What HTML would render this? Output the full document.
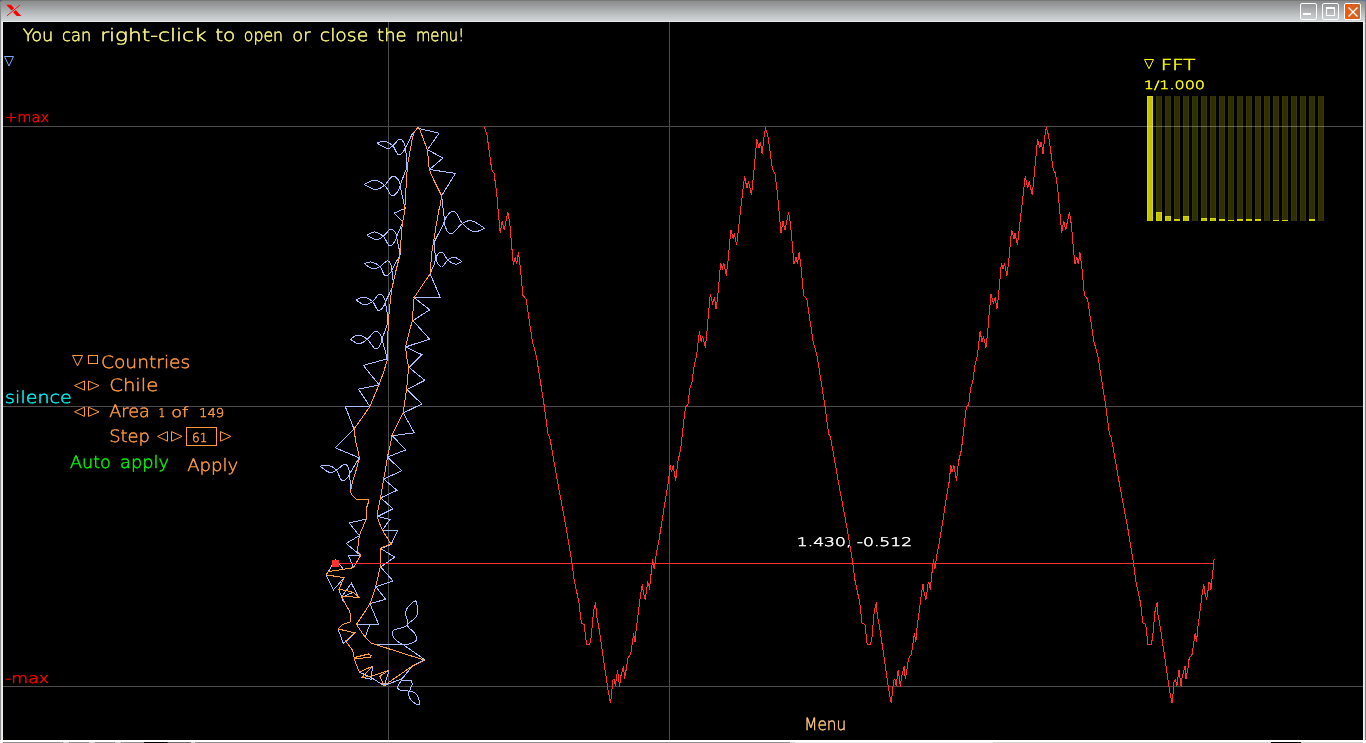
<!DOCTYPE html>
<html lang="en"><head><meta charset="utf-8"><title>FFT Countries</title>
<style>
html,body{margin:0;padding:0;background:#000;overflow:hidden}
body{width:1366px;height:743px;position:relative;font-family:"DejaVu Sans Light","DejaVu Sans","Liberation Sans",sans-serif}
#win{position:absolute;left:0;top:0;width:1366px;height:743px;background:#000;overflow:hidden}
#tb{position:absolute;left:0;top:0;width:1366px;height:22px;background:linear-gradient(to bottom,#787878 0,#787878 1px,#8b8d8c 1px,#999b9c 5.5px,#adb0b1 10.5px,#c0c4c6 15.5px,#d1d5d8 21px,#e4e8ea 21px,#e4e8ea 22px)}
#bl{position:absolute;left:0;top:22px;width:3px;height:718px;background:linear-gradient(to right,#8a8a8a 0,#8a8a8a 1px,#dfe4e8 1px,#eef1f4 3px)}
#br{position:absolute;left:1363px;top:22px;width:3px;height:718px;background:linear-gradient(to right,#eef1f4 0,#dfe4e8 2px,#808080 2px,#808080 3px)}
#bb{position:absolute;left:0;top:740px;width:1366px;height:3px;background:#fff}
#bb2{position:absolute;left:3px;top:742px;width:1360px;height:1px;background:linear-gradient(to right,#8e8e8e 0,#8e8e8e 60px,#d0d0cc 60px,#d0d0cc 66px,#8e8e8e 66px,#8e8e8e 86px,#d0d0cc 86px,#d0d0cc 92px,#8e8e8e 92px,#8e8e8e 112px,#d0d0cc 112px,#d0d0cc 118px,#8e8e8e 118px,#8e8e8e 141px,#000 141px,#000 164px,#6c6c6c 165px,#6c6c6c 188px,#d4d4d0 188px,#d4d4d0 192px,#8e8e8e 192px,#8e8e8e 787px,#d4d4d0 787px,#d4d4d0 792px,#f2f2f2 792px,#f2f2f2 990px,#d2d2ce 990px,#d2d2ce 1268px,#000 1268px,#000 1298px,#d2d2ce 1298px)}
.wb{position:absolute;top:3px;width:15px;height:15px;border:1px solid #fff;border-radius:2px;box-sizing:content-box}
svg{position:absolute;left:0;top:0}
svg text{font-family:"DejaVu Sans Light","DejaVu Sans","Liberation Sans",sans-serif;font-weight:200;white-space:pre;stroke-width:0.45px;text-rendering:geometricPrecision}
.ln{fill:none;stroke-width:1;shape-rendering:crispEdges}
.ic polygon,.ic rect{fill:none;stroke-width:1}
</style></head><body>
<div id="win">
<div id="tb"></div><div id="bl"></div><div id="br"></div><div id="bb"></div><div id="bb2"></div>
<div class="wb" style="left:1300px"></div>
<div class="wb" style="left:1322px"></div>
<div class="wb" style="left:1344px;background:linear-gradient(to right,#f05a0a,#c8642c)"></div>
<svg width="1366" height="743" viewBox="0 0 1366 743">
<!-- title bar icons -->
<polygon points="6.2,4.8 10.9,4.8 21.3,16 16.7,16" fill="#ff0000"/>
<line x1="16.2" y1="8.2" x2="11.2" y2="12.4" stroke="#b4b7b8" stroke-width="2.4"/>
<line x1="19.9" y1="5.1" x2="6.9" y2="15.9" stroke="#ff0000" stroke-width="0.9"/>
<rect x="0" y="0" width="1" height="22" fill="#8a8a8a"/><rect x="1365" y="0" width="1" height="22" fill="#808080"/>
<rect x="0" y="0" width="2" height="1" fill="#5c6068"/><rect x="0" y="1" width="1" height="1" fill="#6c7078"/>
<rect x="1364" y="0" width="2" height="1" fill="#3a78c8"/><rect x="1365" y="1" width="1" height="1" fill="#3a78c8"/>
<rect x="1303" y="13" width="8" height="2" fill="#fff"/>
<rect x="1326.5" y="7.5" width="8" height="8" fill="none" stroke="#fff" stroke-width="1"/><rect x="1326" y="7" width="9" height="2" fill="#fff"/>
<path d="M1348.5,7.5 L1357.5,16.5 M1357.5,7.5 L1348.5,16.5" stroke="#fff" stroke-width="1.3" fill="none"/>
<!-- FFT bars -->
<rect x="1147" y="96" width="6" height="125" fill="#383800"/><rect x="1148" y="96" width="4" height="125" fill="#2f2f02"/><rect x="1147" y="96" width="6" height="125" fill="#d6d600"/><rect x="1148" y="97" width="4" height="124" fill="#c2c200"/><rect x="1156" y="96" width="6" height="125" fill="#383800"/><rect x="1157" y="96" width="4" height="125" fill="#2f2f02"/><rect x="1156" y="212" width="6" height="9" fill="#d6d600"/><rect x="1157" y="213" width="4" height="8" fill="#c2c200"/><rect x="1165" y="96" width="6" height="125" fill="#383800"/><rect x="1166" y="96" width="4" height="125" fill="#2f2f02"/><rect x="1165" y="216" width="6" height="5" fill="#d6d600"/><rect x="1166" y="217" width="4" height="4" fill="#c2c200"/><rect x="1174" y="96" width="6" height="125" fill="#383800"/><rect x="1175" y="96" width="4" height="125" fill="#2f2f02"/><rect x="1174" y="219" width="6" height="2" fill="#d6d600"/><rect x="1175" y="220" width="4" height="1" fill="#caca00"/><rect x="1183" y="96" width="6" height="125" fill="#383800"/><rect x="1184" y="96" width="4" height="125" fill="#2f2f02"/><rect x="1183" y="216" width="6" height="5" fill="#d6d600"/><rect x="1184" y="217" width="4" height="4" fill="#c2c200"/><rect x="1192" y="96" width="6" height="125" fill="#383800"/><rect x="1193" y="96" width="4" height="125" fill="#2f2f02"/><rect x="1201" y="96" width="6" height="125" fill="#383800"/><rect x="1202" y="96" width="4" height="125" fill="#2f2f02"/><rect x="1201" y="218" width="6" height="3" fill="#d6d600"/><rect x="1202" y="219" width="4" height="2" fill="#c2c200"/><rect x="1210" y="96" width="6" height="125" fill="#383800"/><rect x="1211" y="96" width="4" height="125" fill="#2f2f02"/><rect x="1210" y="218" width="6" height="3" fill="#d6d600"/><rect x="1211" y="219" width="4" height="2" fill="#c2c200"/><rect x="1219" y="96" width="6" height="125" fill="#383800"/><rect x="1220" y="96" width="4" height="125" fill="#2f2f02"/><rect x="1219" y="219" width="6" height="2" fill="#d6d600"/><rect x="1220" y="220" width="4" height="1" fill="#caca00"/><rect x="1228" y="96" width="6" height="125" fill="#383800"/><rect x="1229" y="96" width="4" height="125" fill="#2f2f02"/><rect x="1228" y="220" width="6" height="1" fill="#d6d600"/><rect x="1237" y="96" width="6" height="125" fill="#383800"/><rect x="1238" y="96" width="4" height="125" fill="#2f2f02"/><rect x="1237" y="219" width="6" height="2" fill="#d6d600"/><rect x="1238" y="220" width="4" height="1" fill="#caca00"/><rect x="1246" y="96" width="6" height="125" fill="#383800"/><rect x="1247" y="96" width="4" height="125" fill="#2f2f02"/><rect x="1246" y="219" width="6" height="2" fill="#d6d600"/><rect x="1247" y="220" width="4" height="1" fill="#caca00"/><rect x="1255" y="96" width="6" height="125" fill="#383800"/><rect x="1256" y="96" width="4" height="125" fill="#2f2f02"/><rect x="1255" y="219" width="6" height="2" fill="#d6d600"/><rect x="1256" y="220" width="4" height="1" fill="#caca00"/><rect x="1264" y="96" width="6" height="125" fill="#383800"/><rect x="1265" y="96" width="4" height="125" fill="#2f2f02"/><rect x="1273" y="96" width="6" height="125" fill="#383800"/><rect x="1274" y="96" width="4" height="125" fill="#2f2f02"/><rect x="1273" y="220" width="6" height="1" fill="#d6d600"/><rect x="1282" y="96" width="6" height="125" fill="#383800"/><rect x="1283" y="96" width="4" height="125" fill="#2f2f02"/><rect x="1282" y="220" width="6" height="1" fill="#d6d600"/><rect x="1291" y="96" width="6" height="125" fill="#383800"/><rect x="1292" y="96" width="4" height="125" fill="#2f2f02"/><rect x="1300" y="96" width="6" height="125" fill="#383800"/><rect x="1301" y="96" width="4" height="125" fill="#2f2f02"/><rect x="1309" y="96" width="6" height="125" fill="#383800"/><rect x="1310" y="96" width="4" height="125" fill="#2f2f02"/><rect x="1309" y="219" width="6" height="2" fill="#d6d600"/><rect x="1310" y="220" width="4" height="1" fill="#caca00"/><rect x="1318" y="96" width="6" height="125" fill="#383800"/><rect x="1319" y="96" width="4" height="125" fill="#2f2f02"/>
<!-- grid -->
<g class="ln" stroke="#4b4b4b" style="mix-blend-mode:screen">
<line x1="3" y1="126.5" x2="1363" y2="126.5"/><line x1="3" y1="406.5" x2="1363" y2="406.5"/><line x1="3" y1="686.5" x2="1363" y2="686.5"/>
<line x1="388.5" y1="22" x2="388.5" y2="740"/><line x1="669.5" y1="22" x2="669.5" y2="740"/>
</g>
<!-- blue curve -->
<path class="ln" stroke="#aabeff" d="M418.2,127.3 L420.9,129.0 L439.1,133.2 L427.5,149.7 L442.9,158.0 L429.5,169.5 L455.4,173.4 L441.6,195.8 L443.3,210.5 L444.6,221.1 L443.3,224.4 L434.1,242.2 L434.7,251.4 L436.0,258.0 L434.1,264.6 L430.1,273.8 L440.2,297.2 L413.9,297.5 L429.7,309.8 L413.0,320.6 L429.5,339.1 L405.5,347.0 L421.8,354.6 L409.0,367.4 L424.8,380.3 L407.0,389.5 L421.8,404.0 L403.3,413.0 L414.3,432.8 L392.3,435.7 L405.7,449.9 L387.5,457.0 L401.8,470.8 L383.7,479.0 L396.9,490.3 L380.7,497.9 L393.0,508.8 L377.8,516.3 L389.9,519.6 L382.4,530.2 L397.6,530.4 L391.0,544.4 L393.0,541.3 L391.0,544.4 L380.7,548.6 L394.7,557.1 L380.7,567.0 L393.0,580.9 L375.8,586.8 L385.7,599.3 L369.9,603.7 L378.7,624.4 L356.4,624.4 M369.9,624.4 L365.3,636.5 M375.2,644.4 L402.9,644.4 L424.6,659.6 L412.1,666.2 L402.2,678.7 L384.4,685.5 L389.0,670.8 M384.4,685.8 L371.2,677.6 L359.3,672.1 M372.5,666.2 L371.2,679.3 L362.0,677.4 M402.9,644.4 C400.3,643.9 398.1,642.0 396.3,640.4 C394.5,638.8 392.6,636.3 392.3,634.5 C392.0,632.7 392.0,631.4 394.5,629.8 C397.0,628.2 405.7,627.9 407.5,625.0 C409.3,622.1 405.1,615.8 405.4,612.5 C405.7,609.2 407.8,607.4 409.5,605.5 C411.2,603.6 414.1,600.5 415.4,600.9 C416.7,601.3 417.2,605.3 417.3,608.0 C417.4,610.7 417.8,614.2 416.2,617.0 C414.6,619.8 407.8,622.3 407.5,625.0 C407.2,627.7 413.2,630.9 414.7,633.2 C416.2,635.6 417.1,637.5 416.7,639.1 C416.3,640.8 414.4,642.2 412.1,643.1 C409.8,644.0 405.5,644.9 402.9,644.4Z M402.2,678.7 L401.5,680.0 L411.8,680.0 L412.1,684.6 L409.5,691.2 L398.9,689.9 L397.3,687.3 L401.5,680.0 M409.5,691.2 C410.7,691.3 414.5,692.5 416.0,693.8 C417.5,695.1 418.2,697.3 418.7,699.1 C419.2,700.9 420.0,703.9 419.1,704.4 C418.2,704.9 415.0,703.5 413.4,702.4 C411.8,701.3 410.3,699.3 409.5,697.8 C408.7,696.3 408.8,694.3 408.8,693.2 C408.8,692.1 408.3,691.1 409.5,691.2Z M418.2,127.3 L412.3,133.8 L407.7,143.7 L405.3,148.0 L407.0,159.6 L406.4,168.8 L401.8,180.7 L400.2,185.3 L400.4,187.3 L404.4,205.7 L405.5,208.2 L394.1,213.2 L403.1,221.8 L402.4,223.0 L396.5,236.9 L400.2,254.0 L399.1,256.7 L391.9,269.9 L393.2,281.8 L392.3,287.6 L385.3,302.1 L387.9,316.6 L387.9,322.6 L382.0,339.1 L387.3,358.8 L363.3,365.4 L379.1,384.9 L358.5,389.2 L369.8,406.4 L345.3,406.6 L354.0,429.1 L335.2,447.8 L359.3,457.8 L349.5,474.1 L350.8,490.0 M366.0,519.2 L349.1,522.9 L359.3,535.7 L346.2,543.4 L357.8,553.2 L360.7,555.6 L348.5,555.6 L353.4,567.7 M343.0,568.5 L335.3,559.3 L328.4,571.6 M326.1,575.3 L333.6,589.8 L344.2,577.6 M338.9,589.5 L342.9,600.7 M342.2,596.0 L351.4,583.3 L358.7,597.4 M352.1,592.7 L343.5,596.7 M338.2,629.5 L343.5,643.7 L354.7,633.2 M377.0,143.1 C378.4,142.7 381.7,140.6 384.6,141.1 C387.5,141.6 390.3,143.2 392.8,145.7 C395.3,148.2 396.2,154.3 398.5,154.7 C400.8,155.1 404.8,150.6 405.1,147.7 C405.4,144.8 402.7,139.5 400.4,139.1 C398.1,138.7 395.2,144.0 392.8,145.7 C390.4,147.4 390.2,148.9 387.3,148.4 C384.4,147.9 378.9,144.1 377.0,143.1 M364.2,184.4 C366.1,183.6 371.0,180.1 374.7,180.3 C378.4,180.5 381.3,182.5 384.6,185.3 C387.9,188.1 389.6,195.8 392.5,195.8 C395.4,195.8 400.1,188.9 400.2,185.3 C400.3,181.7 396.1,176.0 393.2,176.0 C390.3,176.0 387.9,182.8 384.6,185.3 C381.3,187.8 379.1,189.7 375.4,189.5 C371.7,189.3 366.3,185.3 364.2,184.4 M367.1,235.3 C368.5,234.7 371.7,231.8 374.7,232.0 C377.7,232.2 380.5,233.8 383.3,236.3 C386.1,238.8 387.5,245.8 389.9,245.9 C392.3,246.0 396.3,240.0 396.5,236.9 C396.7,233.8 393.6,229.1 391.2,229.0 C388.8,228.9 386.1,234.4 383.3,236.3 C380.5,238.2 379.0,239.8 376.0,239.6 C373.0,239.4 368.7,236.1 367.1,235.3 M364.2,263.6 C365.5,263.3 368.5,261.4 371.4,262.0 C374.3,262.6 377.5,264.1 380.0,266.6 C382.5,269.1 383.1,275.2 385.3,275.8 C387.5,276.4 391.4,272.6 391.9,269.9 C392.4,267.2 390.1,261.5 387.9,260.9 C385.7,260.3 382.8,265.2 380.0,266.6 C377.2,268.0 375.6,269.2 372.7,268.6 C369.8,268.1 365.8,264.5 364.2,263.6 M356.3,300.2 C357.6,299.6 360.5,296.9 363.5,297.1 C366.5,297.3 369.7,299.0 372.5,301.5 C375.3,304.0 376.4,310.6 378.7,310.7 C381.0,310.8 385.1,305.2 385.3,302.1 C385.5,299.0 382.3,294.1 380.0,294.0 C377.7,293.9 375.3,299.5 372.5,301.5 C369.7,303.5 367.8,305.0 364.8,304.8 C361.8,304.6 357.9,301.0 356.3,300.2 M350.3,339.3 C351.7,338.5 355.1,335.1 358.2,335.1 C361.3,335.1 363.9,336.8 367.2,339.3 C370.5,341.8 373.3,349.0 376.0,349.0 C378.7,349.0 382.0,342.4 382.0,339.1 C382.0,335.8 378.7,331.2 376.0,331.2 C373.3,331.2 370.3,337.0 367.2,339.3 C364.1,341.6 362.0,343.7 358.9,343.7 C355.8,343.7 351.9,340.1 350.3,339.3 M320.0,466.2 C321.5,466.0 325.4,464.6 328.4,465.3 C331.4,466.0 333.8,467.4 336.3,470.2 C338.8,473.0 339.8,480.0 342.2,480.7 C344.6,481.4 348.9,477.1 349.5,474.1 C350.1,471.1 347.9,464.9 345.5,464.2 C343.1,463.5 339.2,468.7 336.3,470.2 C333.4,471.7 332.7,473.2 329.7,472.5 C326.7,471.8 321.8,467.4 320.0,466.2 M484.8,228.4 C482.4,227.0 475.8,221.7 471.7,220.8 C467.6,219.9 466.3,221.1 462.4,223.5 C458.5,225.9 453.9,234.3 450.6,233.9 C447.3,233.5 444.0,225.3 444.6,221.1 C445.2,216.9 450.6,210.8 453.9,211.2 C457.2,211.6 458.8,219.8 462.4,223.5 C466.0,227.2 469.5,230.7 473.6,231.6 C477.7,232.5 482.7,229.0 484.8,228.4 M461.8,261.3 C460.4,260.5 456.4,257.3 453.9,257.1 C451.4,256.9 450.2,258.2 447.9,260.0 C445.6,261.8 443.5,267.4 441.3,267.0 C439.1,266.6 435.9,260.7 436.0,258.0 C436.1,255.3 439.8,251.7 442.0,252.1 C444.2,252.5 445.4,257.8 447.9,260.0 C450.4,262.2 453.3,264.0 455.8,264.2 C458.3,264.4 460.7,261.8 461.8,261.3"/>
<!-- orange outline -->
<path class="ln" stroke="#ffa040" d="M417.9,127.3 L420.2,130.5 L427.5,150.3 L429.2,169.5 L434.7,182.0 L441.6,195.8 L440.3,205.7 L439.3,207.9 L436.0,226.4 L433.7,240.9 L431.8,252.7 L430.1,273.8 L414.1,297.5 L413.0,311.4 L412.0,321.9 L408.4,335.1 L405.7,346.3 L406.4,356.2 L408.6,366.8 L407.3,383.0 L406.4,390.2 L403.3,412.6 L392.3,434.3 L389.9,446.2 L387.5,456.8 L385.7,468.2 L383.7,478.7 L380.7,497.2 L378.9,505.1 L377.1,514.3 L378.5,520.9 L382.4,530.2 L391.0,544.0 L380.7,548.0 L380.4,566.4 L375.2,588.8 L369.9,604.0 L356.4,624.3 L364.6,636.5 L371.2,643.1 L375.2,644.4 L424.6,660.2 L412.1,666.2 L383.9,685.7 L379.8,676.0 L389.0,670.4 L371.2,676.4 L362.0,677.4 L372.5,666.2 L359.3,672.1 L354.2,659.0 L370.5,657.2 L371.2,655.6 L368.6,654.0 L354.1,657.6 L352.7,650.3 L345.5,641.1 L354.7,632.8 L338.2,629.0 L342.9,624.4 L350.8,621.8 L350.8,615.8 L349.5,611.2 L343.5,600.7 L342.5,596.4 L359.3,597.4 L352.8,592.1 L338.9,589.1 L344.2,577.6 L326.1,574.9 L328.4,571.6 L353.4,567.7 L360.7,555.2 L357.8,551.9 L357.8,547.3 L359.3,535.4 L366.6,518.3 L366.6,507.7 L368.6,501.8 L368.6,499.4 L356.4,499.4 L352.1,495.2 L350.4,491.3 L352.7,481.4 L356.7,468.2 L359.5,457.8 L355.6,440.9 L354.0,429.1 L369.8,406.6 L378.7,385.5 L382.6,375.0 L384.0,370.7 L387.5,359.5 L387.5,341.7 L388.6,319.3 L389.6,307.4 L391.2,292.9 L392.5,285.7 L395.2,273.8 L399.8,255.4 L400.7,243.5 L402.4,222.4 L404.4,213.2 L405.5,199.1 L406.4,179.3 L407.7,163.5 L409.7,153.0 L412.3,138.5 L413.9,132.5 L417.9,127.3Z"/>
<!-- wave -->
<path class="ln" stroke="#ff3232" d="M484.4,127.0 L487.0,135.0 L491.7,169.5 L494.1,173.5 L496.6,192.7 L500.2,233.0 L502.2,221.0 L504.2,230.0 L507.9,211.9 L509.9,225.0 L513.3,264.4 L515.3,257.3 L516.7,264.4 L518.4,252.2 L520.3,267.0 L522.9,295.2 L526.1,299.2 L532.3,341.0 L536.3,355.7 L544.4,407.0 L547.9,433.8 L549.7,437.0 L558.2,485.4 L566.6,530.0 L572.0,563.3 L574.1,580.0 L579.0,602.7 L581.3,622.8 L584.2,624.6 L586.5,644.4 L589.8,644.4 L591.2,636.8 L593.5,611.5 L595.6,602.4 L596.5,615.0 L599.1,629.0 L607.0,683.2 L608.2,691.0 L610.5,703.3 L611.9,691.0 L612.6,680.6 L614.0,679.3 L615.4,685.8 L617.5,670.0 L619.6,686.7 L620.6,677.0 L623.6,666.0 L624.5,678.8 L626.6,667.4 L627.6,658.7 L630.6,654.3 L631.8,646.5 L633.6,633.3 L635.0,642.0 L636.4,627.2 L638.5,611.5 L640.6,594.0 L642.3,584.4 L643.4,593.1 L645.2,599.5 L646.9,587.9 L647.5,582.0 L648.6,583.5 L649.5,589.5 L651.1,573.6 L652.6,559.0 L654.1,568.9 L655.9,556.4 L659.1,539.1 L662.3,519.7 L664.9,502.5 L668.4,482.0 L670.1,465.4 L671.4,472.3 L673.1,465.4 L675.7,480.5 L677.8,461.5 L680.6,450.0 L684.0,419.6 L685.6,406.5 L687.9,405.4 L689.7,388.7 L692.0,381.8 L694.3,364.7 L696.6,355.5 L699.4,331.5 L701.2,341.8 L702.6,336.0 L705.3,347.5 L706.9,332.6 L708.5,313.2 L710.3,294.2 L712.6,302.9 L714.5,297.2 L716.1,309.3 L717.7,296.0 L718.8,285.0 L720.6,263.0 L722.4,268.7 L723.8,263.0 L726.3,275.6 L727.9,261.9 L730.9,229.8 L733.2,239.0 L734.3,233.3 L736.6,245.4 L738.4,229.8 L741.2,204.7 L744.6,176.0 L746.9,188.2 L748.5,181.3 L751.5,195.0 L753.1,179.5 L756.8,139.5 L759.0,147.5 L760.4,141.7 L762.2,154.3 L764.1,136.0 L765.6,128.0 L765.1,127.0 L767.8,135.0 L772.5,169.5 L774.9,173.5 L777.4,192.7 L781.0,233.0 L783.0,221.0 L785.0,230.0 L788.6,211.9 L790.6,225.0 L794.0,264.4 L796.0,257.3 L797.5,264.4 L799.1,252.2 L801.0,267.0 L803.6,295.2 L806.9,299.2 L813.0,341.0 L817.0,355.7 L825.1,407.0 L828.6,433.8 L830.5,437.0 L839.0,485.4 L847.4,530.0 L852.8,563.3 L854.9,580.0 L859.8,602.7 L862.0,622.8 L865.0,624.6 L867.2,644.4 L870.5,644.4 L872.0,636.8 L874.2,611.5 L876.4,602.4 L877.2,615.0 L879.9,629.0 L887.8,683.2 L889.0,691.0 L891.2,703.3 L892.6,691.0 L893.4,680.6 L894.8,679.3 L896.1,685.8 L898.2,670.0 L900.4,686.7 L901.4,677.0 L904.4,666.0 L905.2,678.8 L907.4,667.4 L908.4,658.7 L911.4,654.3 L912.5,646.5 L914.4,633.3 L915.8,642.0 L917.1,627.2 L919.2,611.5 L921.4,594.0 L923.0,584.4 L924.1,593.1 L926.0,599.5 L927.6,587.9 L928.2,582.0 L929.4,583.5 L930.2,589.5 L931.9,573.6 L933.4,559.0 L934.9,568.9 L936.6,556.4 L939.9,539.1 L943.0,519.7 L945.6,502.5 L949.1,482.0 L950.9,465.4 L952.1,472.3 L953.9,465.4 L956.5,480.5 L958.5,461.5 L961.4,450.0 L964.8,419.6 L966.4,406.5 L968.6,405.4 L970.5,388.7 L972.8,381.8 L975.0,364.7 L977.4,355.5 L980.1,331.5 L982.0,341.8 L983.4,336.0 L986.0,347.5 L987.6,332.6 L989.2,313.2 L991.0,294.2 L993.4,302.9 L995.2,297.2 L996.9,309.3 L998.5,296.0 L999.5,285.0 L1001.4,263.0 L1003.1,268.7 L1004.5,263.0 L1007.0,275.6 L1008.6,261.9 L1011.6,229.8 L1014.0,239.0 L1015.0,233.3 L1017.4,245.4 L1019.1,229.8 L1022.0,204.7 L1025.3,176.0 L1027.7,188.2 L1029.2,181.3 L1032.2,195.0 L1033.8,179.5 L1037.5,139.5 L1039.8,147.5 L1041.2,141.7 L1043.0,154.3 L1044.8,136.0 L1046.3,128.0 L1045.9,127.0 L1048.5,135.0 L1053.2,169.5 L1055.6,173.5 L1058.1,192.7 L1061.7,233.0 L1063.7,221.0 L1065.7,230.0 L1069.4,211.9 L1071.4,225.0 L1074.8,264.4 L1076.8,257.3 L1078.2,264.4 L1079.9,252.2 L1081.8,267.0 L1084.4,295.2 L1087.6,299.2 L1093.8,341.0 L1097.8,355.7 L1105.9,407.0 L1109.4,433.8 L1111.2,437.0 L1119.7,485.4 L1128.1,530.0 L1133.5,563.3 L1135.6,580.0 L1140.5,602.7 L1142.8,622.8 L1145.7,624.6 L1148.0,644.4 L1151.3,644.4 L1152.7,636.8 L1155.0,611.5 L1157.1,602.4 L1158.0,615.0 L1160.6,629.0 L1168.5,683.2 L1169.7,691.0 L1172.0,703.3 L1173.4,691.0 L1174.1,680.6 L1175.5,679.3 L1176.9,685.8 L1179.0,670.0 L1181.1,686.7 L1182.1,677.0 L1185.1,666.0 L1186.0,678.8 L1188.1,667.4 L1189.1,658.7 L1192.1,654.3 L1193.3,646.5 L1195.1,633.3 L1196.5,642.0 L1197.9,627.2 L1200.0,611.5 L1202.1,594.0 L1203.8,584.4 L1204.9,593.1 L1206.7,599.5 L1208.4,587.9 L1209.0,582.0 L1210.1,583.5 L1211.0,589.5 L1212.6,573.6 L1214.1,559.0"/>
<line class="ln" stroke="#ff3232" x1="336" y1="563.5" x2="1214" y2="563.5"/>
<rect x="332" y="560" width="7" height="7" fill="#ff3232"/>
<g class="ic"><polygon points="4.5,56.5 13.5,56.5 9,66" stroke="#78acf4"/><polygon points="72.5,355.5 82.5,355.5 77.5,366" stroke="#ff9a42"/><rect x="88.5" y="355.5" width="9" height="8" stroke="#ff9a42"/><polygon points="74.5,385.6 84.5,381.0 84.5,390.20000000000005" stroke="#ff9a42"/><polygon points="99,385.6 88.5,381.0 88.5,390.20000000000005" stroke="#ff9a42"/><polygon points="74.5,411.8 84.5,407.2 84.5,416.40000000000003" stroke="#ff9a42"/><polygon points="99,411.8 88.5,407.2 88.5,416.40000000000003" stroke="#ff9a42"/><polygon points="157.5,436.4 167.5,431.59999999999997 167.5,441.2" stroke="#ff9a42"/><polygon points="182,436.4 171.5,431.59999999999997 171.5,441.2" stroke="#ff9a42"/><polygon points="230.8,436.4 220.5,431.59999999999997 220.5,441.2" stroke="#ff9a42"/><rect x="186.5" y="427.5" width="30" height="18" stroke="#ff9a42"/><polygon points="1144.5,59.5 1153.5,59.5 1149,68.7" stroke="#ffff00"/></g>
<text y="40.8" font-size="17" fill="#fffa80" stroke="#fffa80"><tspan x="22.7" textLength="30.7" lengthAdjust="spacingAndGlyphs">You</tspan> <tspan x="62.1" textLength="29.3" lengthAdjust="spacingAndGlyphs">can</tspan> <tspan x="100.2" textLength="106.3" lengthAdjust="spacingAndGlyphs">right-click</tspan> <tspan x="215.2" textLength="20.3" lengthAdjust="spacingAndGlyphs">to</tspan> <tspan x="243.8" textLength="39.3" lengthAdjust="spacingAndGlyphs">open</tspan> <tspan x="292.3" textLength="18.2" lengthAdjust="spacingAndGlyphs">or</tspan> <tspan x="319.8" textLength="48.4" lengthAdjust="spacingAndGlyphs">close</tspan> <tspan x="377.1" textLength="29.5" lengthAdjust="spacingAndGlyphs">the</tspan> <tspan x="415.9" textLength="48.3" lengthAdjust="spacingAndGlyphs">menu!</tspan></text>
<text x="5.1" y="122.3" font-size="14" fill="#ff0000" stroke="#ff0000" textLength="44.0" lengthAdjust="spacingAndGlyphs" >+max</text>
<text x="5.1" y="683" font-size="14" fill="#ff0000" stroke="#ff0000" textLength="44.0" lengthAdjust="spacingAndGlyphs" >-max</text>
<text x="5.1" y="403" font-size="16.5" fill="#00f2f2" stroke="#00f2f2" textLength="66.8" lengthAdjust="spacingAndGlyphs" >silence</text>
<text x="100.9" y="368" font-size="17" fill="#ff9a42" stroke="#ff9a42" textLength="89.4" lengthAdjust="spacingAndGlyphs" >Countries</text>
<text x="109.2" y="391" font-size="17" fill="#ff9a42" stroke="#ff9a42" textLength="49.1" lengthAdjust="spacingAndGlyphs" >Chile</text>
<text y="416.8" font-size="17" fill="#ff9a42" stroke="#ff9a42"><tspan x="109.2" font-size="17" textLength="40.7" lengthAdjust="spacingAndGlyphs">Area</tspan> <tspan x="158.4" font-size="12" textLength="6.7" lengthAdjust="spacingAndGlyphs">1</tspan> <tspan x="171.2" font-size="14" textLength="17.0" lengthAdjust="spacingAndGlyphs">of</tspan> <tspan x="199.0" font-size="12" textLength="25.3" lengthAdjust="spacingAndGlyphs">149</tspan></text>
<text x="109.2" y="441.8" font-size="17" fill="#ff9a42" stroke="#ff9a42" textLength="40.7" lengthAdjust="spacingAndGlyphs" >Step</text>
<text x="192.0" y="442" font-size="12.5" fill="#ff9a42" stroke="#ff9a42" textLength="15.3" lengthAdjust="spacingAndGlyphs" >61</text>
<text y="468.2" font-size="17" fill="#00fa00" stroke="#00fa00"><tspan x="70.0" textLength="40.9" lengthAdjust="spacingAndGlyphs">Auto</tspan> <tspan x="120.1" textLength="49.0" lengthAdjust="spacingAndGlyphs">apply</tspan></text>
<text x="187.2" y="471.2" font-size="17" fill="#ff9a42" stroke="#ff9a42" textLength="51.1" lengthAdjust="spacingAndGlyphs" >Apply</text>
<text x="1160.8" y="69.9" font-size="15" fill="#ffff00" stroke="#ffff00" textLength="34.7" lengthAdjust="spacingAndGlyphs" >FFT</text>
<text x="1143.8" y="88.6" font-size="11.5" fill="#ffff00" stroke="#ffff00" textLength="61.2" lengthAdjust="spacingAndGlyphs" >1/1.000</text>
<text x="796.8" y="546.1" font-size="11.8" fill="#ffffff" stroke="#ffffff" textLength="115.3" lengthAdjust="spacingAndGlyphs" >1.430, -0.512</text>
<text x="804.2" y="729.8" font-size="17" fill="#ffc878" stroke="#ffc878" textLength="42.0" lengthAdjust="spacingAndGlyphs" >Menu</text>
</svg>
</div>
</body></html>
